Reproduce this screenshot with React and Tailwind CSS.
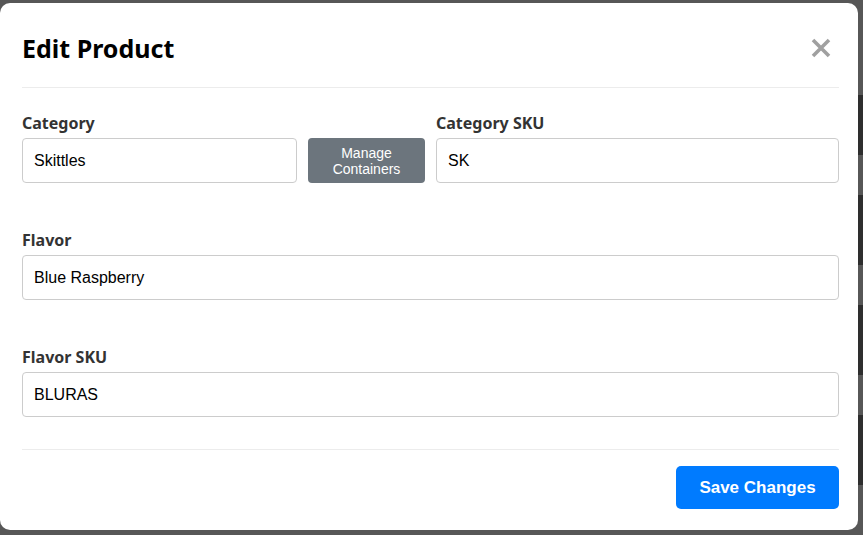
import { useState } from "react";

const Field = ({ label, value, className = "" }) => (
  <div className={className}>
    <label className="block h-6 mb-1 text-[16px] leading-6 font-bold text-[#333] font-['Noto_Sans',sans-serif] translate-y-[1px]">{label}</label>
    <input
      defaultValue={value}
      className="w-full h-[45px] px-[11px] border border-[#ccc] rounded-[4px] text-[16px] text-black font-['Liberation_Sans',Arial,sans-serif] outline-none"
    />
  </div>
);

const App = () => {
  const [open] = useState(true);

  return (
    <div className="w-[863px] h-[535px] bg-[#575757] overflow-hidden flex">
      {open && (
        <div className="w-[858px] h-[527px] mt-[3px] bg-white rounded-[10px] flex flex-col pl-[22px] pr-[19px]">
          <div className="h-[85px] pt-[29px] flex items-start justify-between border-b border-[#ececec]">
            <h2 className="text-[25px] leading-8 font-bold text-black font-['Noto_Sans',sans-serif]">Edit Product</h2>
            <button className="mt-[6px] mr-[8px]" aria-label="Close">
              <svg width="20" height="20" viewBox="0 0 20 20">
                <path d="M2 2 L18 18 M18 2 L2 18" stroke="#a0a0a0" strokeWidth="3.6" strokeLinecap="butt" />
              </svg>
            </button>
          </div>

          <div className="pt-[22px]">
            <div className="flex items-end gap-[11px]">
              <Field label="Category" value="Skittles" className="w-[275px]" />
              <button className="w-[117px] h-[45px] bg-[#6c757d] rounded-[4px] text-white text-[14px] leading-4 font-['Liberation_Sans',Arial,sans-serif]">
                Manage
                <br />
                Containers
              </button>
              <Field label="Category SKU" value="SK" className="flex-1" />
            </div>
            <Field label="Flavor" value="Blue Raspberry" className="mt-[44px]" />
            <Field label="Flavor SKU" value="BLURAS" className="mt-[44px]" />
          </div>

          <div className="mt-[32px] border-t border-[#ececec] pt-[16px] flex justify-end">
            <button className="w-[163px] h-[43px] bg-[#007bff] rounded-[5px] text-white text-[17px] font-bold font-['Liberation_Sans',Arial,sans-serif]">
              Save Changes
            </button>
          </div>
        </div>
      )}
      <div className="flex-1 flex flex-col">
        <div className="h-[95px]" />
        <div className="h-[60px] bg-[#2e2e2e]" />
        <div className="h-[40px]" />
        <div className="h-[70px] bg-[#2e2e2e]" />
        <div className="h-[40px]" />
        <div className="h-[70px] bg-[#2e2e2e]" />
        <div className="h-[40px]" />
        <div className="h-[70px] bg-[#2e2e2e]" />
      </div>
    </div>
  );
};

export default App;
